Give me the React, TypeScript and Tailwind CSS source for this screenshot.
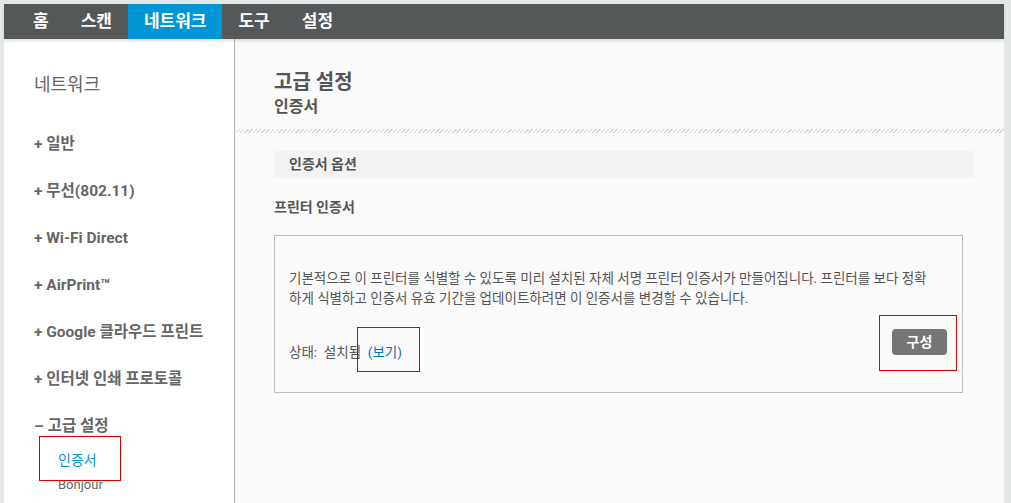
import React from 'react';

const font = { fontFamily: 'Roboto, "Noto Sans CJK KR", sans-serif' };

const tabs = ['홈', '스캔', '네트워크', '도구', '설정'];
const menu = [
  '+ 일반',
  '+ 무선(802.11)',
  '+ Wi-Fi Direct',
  '+ AirPrint™',
  '+ Google 클라우드 프린트',
  '+ 인터넷 인쇄 프로토콜',
];

const App: React.FC = () => {
  return (
    <div
      className="w-full h-[503px] bg-[#e5e8e8] pl-[4px] pr-[7px] pt-[4px] flex flex-col overflow-hidden"
      style={font}
    >
      <div className="h-[35px] bg-[#555859] flex items-stretch pl-[13px] relative z-10 shadow-[0_2px_3px_rgba(0,0,0,0.12)] shrink-0">
        {tabs.map((t) => (
          <div
            key={t}
            className={`px-[16px] flex items-center text-[17px] font-bold text-white ${
              t === '네트워크' ? 'bg-[#0096d6]' : ''
            }`}
          >
            {t}
          </div>
        ))}
      </div>

      <div className="flex flex-1 min-h-0">
        <aside className="w-[231px] bg-white border-r border-[#b8b8b8] pl-[30px] shrink-0 relative">
          <div className="pt-[34px] h-[82px] text-[18px] leading-[24px] text-[#666]">네트워크</div>
          <ul className="flex flex-col">
            {menu.map((m) => (
              <li key={m} className="h-[47px] flex items-center text-[15.5px] font-bold text-[#666]">
                {m}
              </li>
            ))}
            <li className="h-[47px] flex items-center text-[15.5px] font-bold text-[#666]">– 고급 설정</li>
          </ul>
          <div className="pl-[24px] -mt-[2px] text-[14px] leading-[25px] text-[#0096d6]">인증서</div>
          <div className="pl-[24px] -mt-[1px] text-[13px] leading-[25px] text-[#666]">Bonjour</div>
          <div className="absolute left-[35px] top-[397px] w-[82px] h-[45px] border border-[#e00000]" />
        </aside>

        <main className="flex-1 bg-[#fafafa] relative">
          <div className="pl-[39px] pt-[29px]">
            <div className="text-[20px] leading-[28px] font-bold text-[#555]">고급 설정</div>
            <div className="text-[16px] leading-[22px] font-bold text-[#555]">인증서</div>
          </div>
          <div className="mt-[11px] h-[4px] bg-[repeating-linear-gradient(135deg,#d4d4d4_0,#d4d4d4_1px,transparent_1px,transparent_3px)]" />

          <div className="pl-[39px] pr-[30px]">
            <div className="mt-[18px] h-[27px] bg-[#f3f3f3] flex items-center pl-[15px] text-[14px] font-bold text-[#555]">
              인증서 옵션
            </div>
            <div className="mt-[19px] text-[14px] leading-[20px] font-bold text-[#555]">프린터 인증서</div>
            <div className="mt-[18px] mr-[11px] h-[158px] border border-[#bdbdbd] px-[14px] pt-[32px] text-[13.5px] leading-[20px] text-[#555]">
              <p className="whitespace-nowrap">
                기본적으로 이 프린터를 식별할 수 있도록 미리 설치된 자체 서명 프린터 인증서가 만들어집니다. 프린터를 보다 정확
                <br />
                하게 식별하고 인증서 유효 기간을 업데이트하려면 이 인증서를 변경할 수 있습니다.
              </p>
              <div className="mt-[14px] flex items-center justify-between pr-[1px]">
                <span className="mt-[20px]">
                  상태:&nbsp; 설치됨&nbsp; <span className="text-[#0073b7]">(보기)</span>
                </span>
                <button className="w-[55px] h-[26px] bg-[#757575] rounded-[4px] text-white font-bold text-[14px]">
                  구성
                </button>
              </div>
            </div>
          </div>

          <div className="absolute left-[122px] top-[288px] w-[63px] h-[45px] border border-[#e00000]" />
          <div className="absolute left-[644px] top-[276px] w-[78px] h-[56px] border border-[#e00000]" />
        </main>
      </div>
    </div>
  );
};

export default App;
